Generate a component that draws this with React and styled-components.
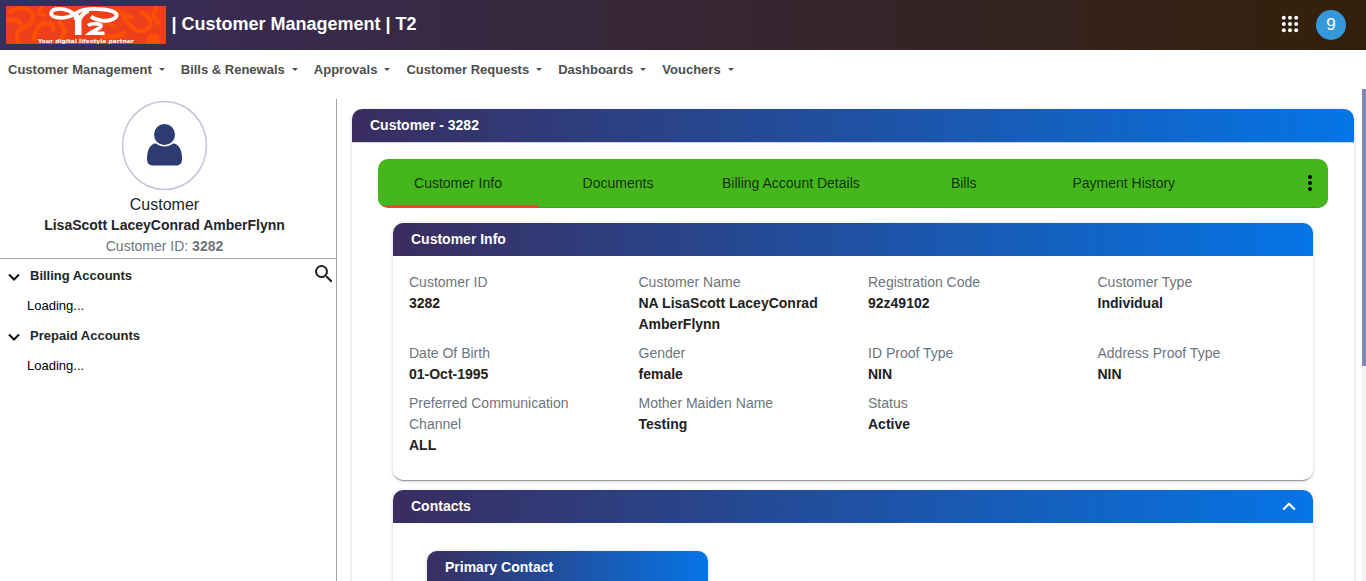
import React from "react";
import styled, { createGlobalStyle } from "styled-components";

const GlobalStyle = createGlobalStyle`
  * { box-sizing: border-box; }
  html, body { margin: 0; height: 100%; overflow: hidden; background: #fff; }
  body { font-family: "Liberation Sans", Arial, sans-serif; font-size: 14px; line-height: 21px; color: #212529; }
`;

const bar = "linear-gradient(to right, #3a2d5f, #0575e6)";

const Page = styled.div`
  height: 581px;
  display: flex;
  flex-direction: column;
  overflow: hidden;
`;

const TopBar = styled.header`
  height: 50px;
  flex: none;
  display: flex;
  align-items: center;
  padding: 0 20px 0 6px;
  background: linear-gradient(to right, #3a2d5f, #33200a);
`;

const Logo = styled.svg`
  width: 160px;
  height: 38px;
  display: block;
`;

const Title = styled.h1`
  margin: 0 auto 0 5.5px;
  font-size: 18px;
  line-height: 24px;
  font-weight: 700;
  color: #fff;
  padding-bottom: 2px;
`;

const AppsIcon = styled.svg`
  width: 18px;
  height: 18px;
  margin: 0 17px 2px 0;
  display: block;
`;

const UserBadge = styled.div`
  width: 30px;
  height: 30px;
  border-radius: 50%;
  background: #3498db;
  color: #fff;
  font-size: 17px;
  line-height: 29px;
  text-align: center;
`;

const Menu = styled.nav`
  height: 39px;
  flex: none;
  display: flex;
  align-items: center;
  gap: 16px;
  padding-left: 8px;
`;

const MenuItem = styled.span`
  display: flex;
  align-items: center;
  font-size: 13px;
  font-weight: 700;
  color: #4d4d4d;
  &::after {
    content: "";
    margin-left: 7px;
    border: 3px solid transparent;
    border-top-color: #4d4d4d;
    border-bottom: 0;
  }
`;

const Body = styled.div`
  flex: 1;
  min-height: 0;
  display: flex;
`;

const Sidebar = styled.aside`
  width: 337px;
  flex: none;
  margin-top: 10px;
  border-right: 1px solid #a3a3a3;
`;

const Profile = styled.div`
  height: 160px;
  padding: 2px 7px 0 0;
  display: flex;
  flex-direction: column;
  align-items: center;
  border-bottom: 1px solid #a3a3a3;
`;

const Avatar = styled.svg`
  width: 87px;
  height: 90px;
  flex: none;
`;

const Role = styled.div`
  font-size: 16px;
  line-height: 24px;
  margin-top: 2px;
`;

const PersonName = styled.div`
  font-weight: 700;
  line-height: 16px;
`;

const PersonId = styled.div`
  color: #6c757d;
  line-height: 21px;
  margin-top: 3px;
`;

const Accounts = styled.div`
  display: flex;
  justify-content: space-between;
  padding: 2px 4px 0 8px;
  font-size: 13px;
`;

const AccountHead = styled.div`
  height: 30px;
  padding-bottom: 1px;
  display: flex;
  align-items: center;
  gap: 10px;
  font-weight: 700;
  svg { margin-top: 3px; }
`;

const Loading = styled.div`
  height: 30px;
  line-height: 30px;
  padding-left: 19px;
  color: #000;
`;

const SearchIcon = styled.svg`
  width: 17.5px;
  height: 17.5px;
  margin-top: 4px;
`;

const Content = styled.main`
  flex: 1;
  min-width: 0;
  padding: 20px 8px 0 15px;
  overflow: hidden;
`;

const ScrollTrack = styled.div`
  width: 4px;
  flex: none;
  background: #f5f3f3;
`;

const ScrollThumb = styled.div`
  height: 277px;
  background: #7e88b8;
`;

const Card = styled.section`
  border-radius: 10px;
  background: #fff;
  box-shadow: 0 2px 1px -1px rgba(0, 0, 0, 0.24), 0 1px 1px rgba(0, 0, 0, 0.16), 0 1px 4px rgba(0, 0, 0, 0.16);
  width: ${(p) => p.$width || "auto"};
  height: ${(p) => p.$height || "auto"};
  margin-bottom: 10px;
`;

const CardHead = styled.h2`
  margin: 0;
  height: 33px;
  padding: 0 17px 0 18px;
  display: flex;
  align-items: center;
  justify-content: space-between;
  border-radius: 10px 10px 0 0;
  background: ${bar};
  color: #fff;
  font-size: 14px;
  font-weight: 700;
`;

const CardBody = styled.div`
  border-top: 1px solid #cfd0d4;
  padding: 16px 26px 0;
`;

const TabBar = styled.div`
  height: 49px;
  display: flex;
  align-items: stretch;
  border-radius: 10px;
  overflow: hidden;
  background: #45b71d;
  border-bottom: 1px solid #3da31a;
  margin-bottom: 15px;
`;

const Tab = styled.div`
  min-width: 160px;
  padding: 0 24px;
  display: flex;
  align-items: center;
  justify-content: center;
  color: rgba(0, 0, 0, 0.75);
  box-shadow: ${(p) => (p.$active ? "inset 0 -2px #f44336" : "none")};
`;

const MoreIcon = styled.svg`
  width: 6px;
  height: 18px;
  margin: 14.5px 15px 0 auto;
`;

const Panels = styled.div`
  padding: 0 15px;
`;

const Fields = styled.dl`
  margin: 0;
  padding: 16px 1px 0;
  display: grid;
  grid-template-columns: repeat(4, 1fr);
  row-gap: 8px;
`;

const Field = styled.div`
  padding: 0 15px;
  dt { color: #6c757d; }
  dd { margin: 0; font-weight: 700; color: #212121; }
`;

const ContactArea = styled.div`
  padding: 28px 34px 0;
`;

const menus = ["Customer Management", "Bills & Renewals", "Approvals", "Customer Requests", "Dashboards", "Vouchers"];
const tabs = ["Customer Info", "Documents", "Billing Account Details", "Bills", "Payment History"];
const fields = [
  ["Customer ID", "3282"],
  ["Customer Name", "NA LisaScott LaceyConrad AmberFlynn"],
  ["Registration Code", "92z49102"],
  ["Customer Type", "Individual"],
  ["Date Of Birth", "01-Oct-1995"],
  ["Gender", "female"],
  ["ID Proof Type", "NIN"],
  ["Address Proof Type", "NIN"],
  ["Preferred Communication Channel", "ALL"],
  ["Mother Maiden Name", "Testing"],
  ["Status", "Active"],
];

function BrandLogo() {
  return (
    <Logo viewBox="0 0 160 38">
      <rect width="160" height="38" fill="#ee3f1b" />
      <g fill="none" stroke="#fb4f08" strokeWidth="4.5" strokeLinecap="round">
        <path d="M4 6C14-1 29 3 27 13c-1 7-9 6-14 11-3 4-2 9-1 12M2 15q9-3 12 2M28 33q1-14 12-16 9 0 7 7M36 2q-6 6 2 7M54 17q8 8 1 16" />
        <path d="M92 18q10-4 16 2M118 12q14 20 24 10 7-9-6-15M112 3q4 8 14 8M150 2q-5 7 2 15M96 30q12 3 22-3" />
      </g>
      <circle cx="147" cy="34" r="7" fill="#fb4f08" />
      <g fill="none" stroke="#fff">
        <path strokeWidth="3.8" d="M71 13C68 5 58 2.500 52 3c-8 .5-9 6.500-3 8 9 2.300 17-1 22-4.500C78 2.200 88 2.400 98 3.500c13 1.500 16 6 9 9.500-6 3-16 2-22-2.500" />
        <path strokeWidth="6.500" d="M72.200 29V15q0-3-3-5.500" />
        <path strokeWidth="4" d="M73.500 14q1-5 9-9.500" />
        <path strokeWidth="3.600" d="M82 19.500c3-2.500 13-2.500 13 .5 0 2.500-7 4-11 7.200h14.500" />
      </g>
      <text x="32" y="37" fill="#fff" fontFamily="DejaVu Sans, sans-serif" fontWeight="700" fontSize="5.400" textLength="96" lengthAdjust="spacingAndGlyphs">Your digital lifestyle partner</text>
    </Logo>
  );
}

function Chevron({ up, color }) {
  return (
    <svg width={up ? 14 : 12} height={up ? 9 : 8} viewBox={up ? "0 0 14 9" : "0 0 12 8"} fill="none" stroke={color} strokeWidth={up ? 2.2 : 2}>
      <path d={up ? "M1.200 7.500L7 1.700l5.800 5.800" : "M1 1.500l5 5 5-5"} />
    </svg>
  );
}

function AccountGroup({ label }) {
  return (
    <div>
      <AccountHead><Chevron color="#111" />{label}</AccountHead>
      <Loading>Loading...</Loading>
    </div>
  );
}

export default function App() {
  return (
    <Page>
      <GlobalStyle />
      <TopBar>
        <BrandLogo />
        <Title>| Customer Management | T2</Title>
        <AppsIcon viewBox="0 0 18 18" fill="#fff">
          {[2.8, 9, 15.2].flatMap((y) => [2.8, 9, 15.2].map((x) => <circle key={`${x}-${y}`} cx={x} cy={y} r="2" />))}
        </AppsIcon>
        <UserBadge>9</UserBadge>
      </TopBar>
      <Menu>{menus.map((m) => <MenuItem key={m}>{m}</MenuItem>)}</Menu>
      <Body>
        <Sidebar>
          <Profile>
            <Avatar viewBox="0 0 87 90">
              <ellipse cx="43.5" cy="44.5" rx="42" ry="44" fill="#fff" stroke="#c3c5dc" strokeWidth="1.5" />
              <circle cx="43.5" cy="33.5" r="10.5" fill="#2d3b70" />
              <path d="M35 42.5c5 4 12 4 17 0 6 0 9 7 9 15 0 5-2 7-6 7H32c-4 0-6-2-6-7 0-8 3-15 9-15z" fill="#2d3b70" />
            </Avatar>
            <Role>Customer</Role>
            <PersonName>LisaScott LaceyConrad AmberFlynn</PersonName>
            <PersonId>Customer ID: <b>3282</b></PersonId>
          </Profile>
          <Accounts>
            <div>
              <AccountGroup label="Billing Accounts" />
              <AccountGroup label="Prepaid Accounts" />
            </div>
            <SearchIcon viewBox="3 3 17.5 17.5" fill="#212121">
              <path d="M15.5 14h-.79l-.28-.27A6.47 6.47 0 0 0 16 9.5 6.5 6.5 0 1 0 9.5 16c1.61 0 3.09-.59 4.23-1.57l.27.28v.79l5 4.99L20.49 19l-4.99-5zm-6 0C7.01 14 5 11.99 5 9.5S7.01 5 9.5 5 14 7.01 14 9.5 11.99 14 9.5 14z" />
            </SearchIcon>
          </Accounts>
        </Sidebar>
        <Content>
          <Card>
            <CardHead>Customer - 3282</CardHead>
            <CardBody>
              <TabBar>
                {tabs.map((t, i) => <Tab key={t} $active={i === 0}>{t}</Tab>)}
                <MoreIcon viewBox="0 0 6 18" fill="#000">
                  <circle cx="3" cy="3" r="2" />
                  <circle cx="3" cy="9" r="2" />
                  <circle cx="3" cy="15" r="2" />
                </MoreIcon>
              </TabBar>
              <Panels>
                <Card $height="257px">
                  <CardHead>Customer Info</CardHead>
                  <Fields>
                    {fields.map(([k, v]) => <Field key={k}><dt>{k}</dt><dd>{v}</dd></Field>)}
                  </Fields>
                </Card>
                <Card $height="300px">
                  <CardHead>Contacts<Chevron up color="#fff" /></CardHead>
                  <ContactArea>
                    <Card $width="281px" $height="200px">
                      <CardHead>Primary Contact</CardHead>
                    </Card>
                  </ContactArea>
                </Card>
              </Panels>
            </CardBody>
          </Card>
        </Content>
        <ScrollTrack><ScrollThumb /></ScrollTrack>
      </Body>
    </Page>
  );
}
